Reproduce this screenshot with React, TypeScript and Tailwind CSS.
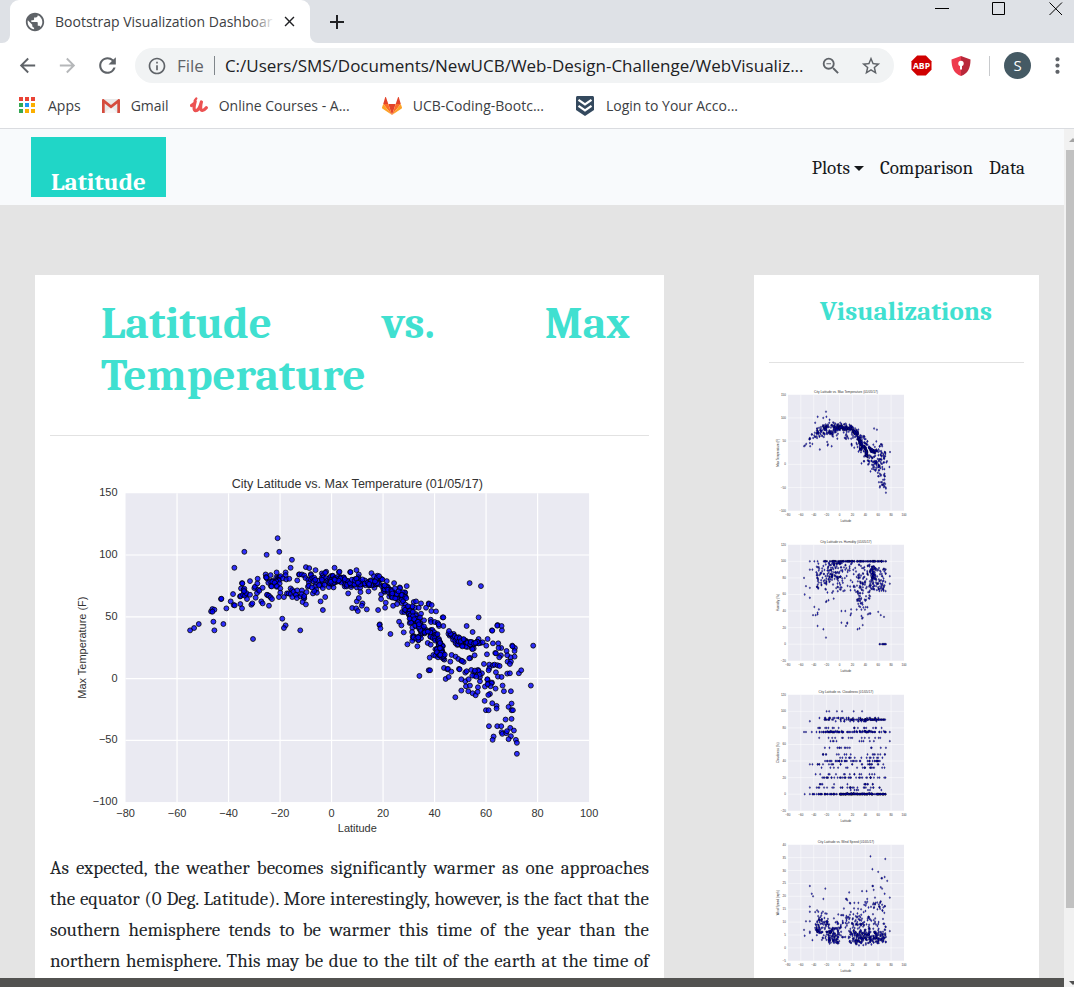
import React from "react";
import {
  MdAdd, MdArrowBack, MdArrowForward, MdClose, MdInfoOutline, MdMoreVert, MdPublic, MdRefresh, MdStarBorder, MdZoomOut,
} from "react-icons/md";

type Point = [number, number];

// Seeded generator, so that the sample data is the same on every load.
function makeRandom(seed: number) {
  let s = seed;
  return () => {
    s = (s * 1664525 + 1013904223) % 4294967296;
    return s / 4294967296;
  };
}

// Temperature samples on a 0-1800 x 0-1200 grid.
const west: Point[] = [
  [624,232],[524,273],[591,282],[629,273],[494,321],[667,297],[663,321],[361,509],[373,502],[387,490],[431,483],[434,509],[461,490],
  [454,415],[455,414],[470,443],[550,535],[638,474],[648,494],[643,502],[692,509],[760,448],[424,452],[428,445],[434,447],[428,453],
  [483,422],[490,400],[492,433],[495,434],[512,430],[517,443],[511,407],[513,406],[517,367],[518,368],[514,383],[522,387],[524,384],[524,395],[528,401],
  [520,402],[526,405],[532,415],[530,397],[523,391],[541,402],[541,361],[545,432],[548,428],[558,411],[554,382],[556,378],[564,354],[563,368],
  [566,387],[562,397],[569,390],[579,381],[575,422],[579,428],[598,435],[588,341],[589,349],[592,353],[590,350],[603,343],[596,366],[602,362],
  [608,360],[611,365],[608,363],[604,376],[606,377],[594,403],[592,402],[598,405],[603,410],[607,415],[621,335],[620,350],[624,352],[629,350],[630,349],[633,346],
  [626,358],[628,359],[620,362],[615,366],[630,368],[621,378],[622,376],[632,383],[632,396],[628,409],[643,409],[648,335],[648,343],[640,353],[650,356],
  [659,354],[652,398],[657,398],[663,383],[668,388],[663,400],[668,409],[672,393],[680,403],[679,402],[683,389],[682,412],[683,359],[688,341],[690,341],
  [697,341],[704,344],[693,407],[697,389],[696,400],[704,413],[703,411],[704,406],[699,424],[709,431],[711,394],[709,319],[719,322],[738,328],
  [724,340],[724,343],[708,352],[716,357],[718,366],[715,378],[718,375],[724,357],[728,352],[734,351],[732,362],[740,367],[736,377],[740,386],[730,398],
  [742,396],[734,391],[753,422],[767,409],[757,338],[760,343],[770,333],[767,336],[756,352],[762,350],[758,362],[759,370],[754,375],[760,382],
  [770,352],[774,360],[780,351],[784,346],[788,355],[776,365],[783,372],[792,380],[778,379],[789,363],[796,365],[795,321],[808,334],
  [727,380],[745,360],[749,373],[765,372],[787,366],[757,357],[792,352],[737,357],
];
const east: Point[] = [
  [9,345],[30,333],[62,334],[63,334],[81,328],[88,341],[126,337],[56,398],[65,379],[82,380],[92,381],[93,394],[117,392],[135,381],
  [68,442],[80,443],[85,451],[82,422],[88,412],[99,428],[97,435],[112,446],[146,448],[151,491],[150,493],[153,503],[183,520],[194,367],[172,361],
  [232,376],[155,401],[155,415],[169,426],[167,441],[191,435],[203,430],[209,483],[216,494],[223,515],[234,551],[264,557],[218,454],[225,454],[230,449],
  [217,427],[211,380],[212,382],[212,396],[227,396],[228,407],[253,424],[260,422],[275,428],[290,441],[298,428],[299,430],[307,433],[306,451],[320,452],
  [257,441],[268,441],[246,441],[249,437],[247,458],[259,460],[275,459],[269,474],[284,479],[304,477],[305,484],[316,484],[325,487],[329,496],[342,496],
  [340,470],[342,470],[328,491],[241,487],[249,483],[257,475],[249,501],[248,514],[250,528],[252,534],[265,530],[272,525],[267,539],[295,547],[304,552],[301,591],
  [270,646],[298,629],[302,629],[349,655],[358,649],[344,622],[354,626],[356,625],[366,633],[345,597],[363,603],[312,583],[318,585],[326,590],
  [421,367],[455,376],[448,470],[412,496],[430,514],[505,493],[504,495],[517,496],[518,509],[488,509],[489,510],[549,555],[557,562],[556,571],[550,557],[612,555],
  [556,588],[544,590],[532,571],[534,584],[535,603],[545,603],[542,610],[516,562],[508,562],[507,548],[491,548],[515,584],[510,590],[498,577],[500,578],
  [475,535],[473,581],[448,535],[454,547],[460,545],[471,555],[436,584],[423,592],[420,593],[367,583],[379,588],[387,595],[396,600],[403,604],[398,601],
  [464,610],[480,612],[491,614],[496,612],[505,614],[511,616],[480,623],[478,629],[500,635],[506,648],[517,649],[534,639],[542,638],[569,638],[576,629],
  [605,675],[524,692],[545,692],[520,675],[499,684],[467,678],[475,657],[474,656],[477,669],[488,666],[487,668],[484,677],[475,671],[482,700],[477,703],
  [466,721],[489,728],[502,736],[502,744],[470,749],[478,749],[547,729],[538,739],[547,749],[551,749],[529,777],[547,775],[479,797],[504,797],[516,797],
  [543,802],[554,810],[517,815],[519,820],[531,818],[533,812],[545,827],[538,836],[560,838],[563,847],[563,880],[493,828],[490,838],[378,710],
  [396,690],[417,692],[430,698],[439,704],[445,694],[446,680],[452,662],[452,649],[410,677],[422,675],[408,662],[396,656],[418,656],
  [389,625],[391,626],[408,636],[412,632],[426,628],[435,635],[435,645],[446,628],[448,631],[458,638],[451,642],[437,630],[429,645],[441,648],
];
// Dense bands: start x, start y, end x, end y, spread, count.
const bands: number[][] = [
  [3,356,52,366,14,34],[48,364,90,364,10,12],[80,358,110,368,13,20],[116,360,155,358,14,28],[160,380,190,400,13,28],[192,396,230,412,14,24],
  [222,436,252,460,12,16],[242,462,268,500,14,28],[262,475,280,525,15,14],[282,505,325,530,13,26],[322,525,344,590,14,28],[322,568,345,578,12,18],
  [358,515,390,545,12,16],[386,540,430,555,12,36],[422,550,450,549,7,10],[245,533,270,534,8,8],
];
const rnd = makeRandom(11);
const temperature: Point[] = [
  ...west.map(([x, y]): Point => [x + 60, y + 45]),
  ...east.map(([x, y]): Point => [x + 840, y + 45]),
  ...bands.flatMap(([x0, y0, x1, y1, spread, n]) =>
    Array.from({ length: n }, (): Point => {
      const t = rnd();
      return [840 + x0 + (x1 - x0) * t + (rnd() - 0.5) * spread, 45 + y0 + (y1 - y0) * t + (rnd() - 0.5) * 2 * spread];
    }),
  ),
];

const PLOT = { left: 227, right: 1620, top: 142, bottom: 1070 };
const toGrid = (min: number, max: number) => ([lat, v]: Point): Point => [
  PLOT.left + ((lat + 80) / 180) * (PLOT.right - PLOT.left),
  PLOT.bottom - ((v - min) / (max - min)) * (PLOT.bottom - PLOT.top),
];

function spread(n: number, seed: number, make: (r: () => number) => Point): Point[] {
  const r = makeRandom(seed);
  return Array.from({ length: n }, () => make(r));
}

const humidity: Point[] = [
  ...([[-55,80],[-54,60],[-52,70],[-46,90],[-46,56],[-46,68],[-42,90],[-39,45],[-32,42],[-41,35],[-37,35],[-34,36],[-34,38],[-34,22],[-25,18],[-21,8],
    [-21,51],[-20,52],[-17,53],[-9,55],[3,40],[9,40],[3,26],[12,25],[12,26],[10,22],[17,35],[18,42],[18,37],[28,18],[31,19],[36,23],[34,34],[35,31],[36,32],
    [44,36],[46,37],[48,37],[60,39],[64,35],[69,33],[62,0],[63,0],[66,0],[67,0],[68,0],[69,0],[70,0],[71,0],[72,0],[78,82],[78,73],[-46,100],[-39,100],[-34,100]] as Point[]),
  ...spread(120, 3, (r) => [-25 + r() * 98, 100]),
  ...spread(50, 5, (r) => [-36 + r() * 16, 64 + r() * 34]),
  ...spread(65, 6, (r) => [-20 + r() * 22, 78 + r() * 21]),
  ...spread(80, 7, (r) => [-20 + r() * 48, 62 + r() * 36]),
  ...spread(85, 8, (r) => [27 + r() * 21, 52 + r() * 44]),
  ...spread(100, 9, (r) => [47 + r() * 25, 64 + r() * 30]),
  ...spread(35, 10, (r) => [50 + r() * 6, 78 + r() * 16]),
  ...spread(16, 12, (r) => [26 + r() * 18, 40 + r() * 16]),
].map(toGrid(-20, 120));

const cloudRow = (v: number, n: number, from: number, to: number, seed: number) =>
  spread(n, seed, (r) => [from + r() * (to - from), v]);
const cloudiness: Point[] = [
  ...([[-20,100],[-16,100],[-4,100],[4,100],[22,100],[35,100],[-46,88],[-55,75],[-52,75],[-43,75],[78,64],[78,75],[-54,0],[-46,0],[-46,36],[-42,36],[-37,24],[-46,8]] as Point[]),
  ...cloudRow(92, 26, -35, 68, 21), ...cloudRow(90, 28, -25, 30, 22), ...cloudRow(90, 60, 30, 72, 23), ...cloudRow(88, 14, -10, 60, 24),
  ...cloudRow(80, 20, -35, 72, 25), ...cloudRow(76, 22, -20, 74, 26), ...cloudRow(75, 75, -36, 72, 27), ...cloudRow(68, 15, -36, 64, 28),
  ...cloudRow(64, 9, -34, 62, 29), ...cloudRow(56, 14, -28, 72, 30), ...cloudRow(48, 18, -30, 74, 31), ...cloudRow(44, 15, -10, 70, 32),
  ...cloudRow(40, 40, -30, 70, 33), ...cloudRow(36, 24, -36, 68, 34), ...cloudRow(32, 18, -35, 70, 35), ...cloudRow(24, 14, -30, 68, 36),
  ...cloudRow(20, 38, -28, 72, 37), ...cloudRow(12, 14, -34, 68, 38), ...cloudRow(8, 26, -36, 72, 39), ...cloudRow(5, 7, 15, 70, 40),
  ...cloudRow(0, 50, -42, 10, 41), ...cloudRow(0, 140, 0, 72, 42), ...cloudRow(1, 16, 10, 55, 43),
].map(toGrid(-20, 120));

const wind: Point[] = [
  ...([[48,35.5],[71,34.5],[51,30.5],[60,29.5],[65,27],[66,27],[70,27.5],[74,26],[-46,24],[-22,23],[-43,21],[-41,20],[-25,19],[15,21.5],[35,22],[42,22],
    [51,24],[52,24],[53,22.5],[64,23.5],[66,23],[70,21],[78,19.5],[10,19],[11,19],[12,18.5],[43,19],[55,19.5],[64,18],[78,6.5],[-55,7],[-54,4.7],[-52,10.3],
    [-46,16],[-46,14],[-46,10.3],[-46,6.3],[-46,5.8],[-42,3]] as Point[]),
  ...spread(55, 51, (r) => [-38 + r() * 20, 6 + r() * r() * 12]),
  ...spread(45, 52, (r) => [-38 + r() * 24, 3 + r() * 8]),
  ...spread(90, 53, (r) => [-18 + r() * 18, 1.5 + r() * 6.5]),
  ...spread(40, 54, (r) => [-12 + r() * 27, 3 + r() * 10]),
  ...spread(170, 55, (r) => [15 + r() * 57, 1.8 + r() * 4.5]),
  ...spread(110, 56, (r) => [14 + r() * 58, 2.5 + r() * 7]),
  ...spread(95, 57, (r) => [4 + r() * 68, 9 + r() * 9]),
  ...spread(6, 58, (r) => [25 + r() * 46, 0.5 + r()]),
].map(toGrid(-5, 40));

type ChartProps = { title: string; yLabel: string; ticks: number[]; points: Point[]; small?: boolean };

function Chart({ title, yLabel, ticks, points, small }: ChartProps) {
  const w = small ? 150 : 600;
  const h = small ? 150 : 400;
  const sx = w / 1800;
  const sy = h / 1200;
  const left = PLOT.left * sx;
  const right = PLOT.right * sx;
  const top = PLOT.top * sy;
  const bottom = PLOT.bottom * sy;
  const tickSize = small ? 3 : 11;
  const fmt = (n: number) => (n < 0 ? "\u2212" + -n : String(n));
  const xs = [-80, -60, -40, -20, 0, 20, 40, 60, 80, 100];
  const px = (i: number) => left + ((right - left) * i) / (xs.length - 1);
  const py = (i: number) => bottom - ((bottom - top) * i) / (ticks.length - 1);
  const labelX = small ? 10 : 36;
  return (
    <svg viewBox={`0 0 ${w} ${h}`} role="img" aria-label={title} className={small ? "block size-[150px]" : "block h-auto w-full"} fontFamily="'Liberation Sans', Arial, sans-serif" fill="#333">
      <rect x={left} y={top} width={right - left} height={bottom - top} fill="#eaeaf2" />
      {xs.slice(1, -1).map((x, i) => (
        <line key={x} x1={px(i + 1)} x2={px(i + 1)} y1={top} y2={bottom} stroke="#fff" strokeWidth={small ? 0.5 : 1.2} />
      ))}
      {ticks.slice(1, -1).map((t, i) => (
        <line key={t} x1={left} x2={right} y1={py(i + 1)} y2={py(i + 1)} stroke="#fff" strokeWidth={small ? 0.5 : 1.2} />
      ))}
      {points.map(([x, y], i) => (
        <ellipse key={i} cx={x * sx} cy={y * sy} rx={7.4 * sx} ry={7.4 * sy} fill="#0000ff" fillOpacity={0.8} stroke="#000" strokeOpacity={0.8} strokeWidth={small ? 0.4 : 1} />
      ))}
      <text x={(left + right) / 2} y={top - (small ? 2 : 5)} textAnchor="middle" fontSize={small ? 3.2 : 12.6}>{title}</text>
      {xs.map((x, i) => (
        <text key={x} x={px(i)} y={bottom + (small ? 5.5 : 15)} textAnchor="middle" fontSize={tickSize}>{fmt(x)}</text>
      ))}
      {ticks.map((t, i) => (
        <text key={t} x={left - (small ? 2 : 8)} y={py(i) + (small ? 1 : 3)} textAnchor="end" fontSize={tickSize}>{fmt(t)}</text>
      ))}
      <text x={(left + right) / 2} y={bottom + (small ? 11.5 : 30)} textAnchor="middle" fontSize={tickSize}>Latitude</text>
      <text transform={`rotate(-90 ${labelX} ${(top + bottom) / 2})`} x={labelX} y={(top + bottom) / 2} textAnchor="middle" fontSize={tickSize}>{yLabel}</text>
    </svg>
  );
}

const plots: ChartProps[] = [
  { title: "City Latitude vs. Max Temperature (01/05/17)", yLabel: "Max Temperature (F)", ticks: [-100, -50, 0, 50, 100, 150], points: temperature },
  { title: "City Latitude vs. Humidity (01/05/17)", yLabel: "Humidity (%)", ticks: [-20, 0, 20, 40, 60, 80, 100, 120], points: humidity },
  { title: "City Latitude vs. Cloudiness (01/05/17)", yLabel: "Cloudiness (%)", ticks: [-20, 0, 20, 40, 60, 80, 100, 120], points: cloudiness },
  { title: "City Latitude vs. Wind Speed (01/05/17)", yLabel: "Wind Speed (mph)", ticks: [-5, 0, 5, 10, 15, 20, 25, 30, 35, 40], points: wind },
];

function AppsIcon() {
  const colors = ["#ea4335", "#ea4335", "#ea4335", "#34a853", "#2196f3", "#fbaf00", "#34a853", "#fbaf00", "#fbaf00"];
  return (
    <svg viewBox="0 0 17 17" className="size-[17px]">
      {colors.map((c, i) => <rect key={i} x={(i % 3) * 6} y={Math.floor(i / 3) * 6} width="4" height="4" fill={c} />)}
    </svg>
  );
}
function GmailIcon() {
  return (
    <svg viewBox="0 0 18 14" className="h-[14px] w-[18px]">
      <rect width="18" height="14" rx="1" fill="#e9e9e9" />
      <path d="M2.5 14 9 8l6.500 6z" fill="#f7f7f7" />
      <path d="M0 1.200V14h2.700V4.500L9 9.500l6.300-5V14H18V1.200C18 .2 16.800-.3 15.900.4L9 6 2.100.4C1.200-.3 0 .2 0 1.200z" fill="#d54b3d" />
    </svg>
  );
}
function UdemyIcon() {
  return (
    <svg viewBox="0 0 18 17" className="h-[17px] w-[18px]" fill="none" stroke="#ec5252" strokeLinecap="round" strokeLinejoin="round">
      <path d="M1.500 8.500 4.200 6.500M5.200 4.500C4 8.500 3.200 13.600 5.800 13.700c2.600 0 4.500-4.700 5.600-8.700-1.200 5-1.100 8.600 1 8.500 1.500-.1 2.700-1.200 3.900-2.700" strokeWidth="3.200" />
      <path d="M4.800 3.500 6.300 1.500" strokeWidth="2.200" />
    </svg>
  );
}
function GitlabIcon() {
  return (
    <svg viewBox="0 0 20 18" className="h-[18px] w-[20px]">
      <path d="M10 18 13.700 7H6.300z" fill="#e24329" />
      <path d="M10 18 6.300 7H1.200zM10 18 13.700 7h5.100z" fill="#fc6d26" />
      <path d="M1.200 7 0 10.500c-.1.400 0 .8.300 1L10 18zM18.800 7 20 10.500c.1.400 0 .8-.3 1L10 18z" fill="#fca326" />
      <path d="M1.200 7h5.100L4 .3c-.1-.4-.6-.4-.8 0zM18.800 7h-5.100L16 .3c.1-.4.600-.4.800 0z" fill="#e24329" />
    </svg>
  );
}
function BootcampIcon() {
  return (
    <svg viewBox="0 0 18 20" className="h-[20px] w-[18px]">
      <path d="M1.500 0h15C17.300 0 18 .7 18 1.500V14l-9 6-9-6V1.500C0 .7.700 0 1.500 0z" fill="#34495e" />
      <path d="m2.500 3.800 6.500 4.700 6.500-4.700M2.500 9.800 9 14.500l6.500-4.700" fill="none" stroke="#fff" strokeWidth="2.200" />
    </svg>
  );
}

const bookmarks = [
  { label: "Apps", icon: <AppsIcon />, cls: "gap-[12px]" },
  { label: "Gmail", icon: <GmailIcon />, cls: "gap-[11px]" },
  { label: "Online Courses - A...", icon: <UdemyIcon />, cls: "gap-[11px]" },
  { label: "UCB-Coding-Bootc...", icon: <GitlabIcon />, cls: "ml-[11px] gap-[11px]" },
  { label: "Login to Your Acco...", icon: <BootcampIcon />, cls: "ml-[11px] gap-[12px]" },
];

function BrowserChrome() {
  return (
    <header className="shrink-0 border-b border-[#dadce0] bg-white font-['Open_Sans','Noto_Sans',sans-serif] text-[#3c4043]">
      <div className="flex h-[43px] justify-between bg-[#dee1e6]">
        <div className="flex pl-[10px]">
          <div className="relative flex w-[300px] items-center rounded-t-[9px] bg-white pl-[14px]">
            <svg viewBox="0 0 8 8" className="absolute bottom-0 -left-2 size-2"><path d="M8 0v8H0a8 8 0 0 0 8-8z" fill="#fff" /></svg>
            <svg viewBox="0 0 8 8" className="absolute -right-2 bottom-0 size-2"><path d="M0 0v8h8a8 8 0 0 1-8-8z" fill="#fff" /></svg>
            <MdPublic className="size-[22px] text-[#5f6368]" />
            <div className="relative ml-[9px] w-[220px] text-[14px] whitespace-nowrap">
              Bootstrap Visualization Dashboar
              <div className="absolute inset-y-0 right-0 w-[24px] bg-linear-to-r from-white/0 to-white" />
            </div>
            <button aria-label="Close tab" className="ml-[6px]"><MdClose className="size-[17px] text-[#202124]" /></button>
          </div>
          <button aria-label="New tab" className="ml-[15px]"><MdAdd className="size-[24px] text-[#202124]" /></button>
        </div>
        <div className="flex gap-[43px] pt-[2px] pr-[11px]">
          <button aria-label="Minimize" className="h-[13px]"><svg viewBox="0 0 14 14" className="size-[14px]"><path d="M0 6.500h14" stroke="#000" /></svg></button>
          <button aria-label="Maximize" className="h-[13px]"><svg viewBox="0 0 14 14" className="size-[14px]"><path d="M.5.5h12v12H.5z" fill="none" stroke="#000" /></svg></button>
          <button aria-label="Close window" className="h-[13px]"><svg viewBox="0 0 14 14" className="size-[14px]"><path d="m.5.5 12.500 12.500M13 .5.500 13" stroke="#000" /></svg></button>
        </div>
      </div>
      <div className="flex h-[45px] items-center pl-[16px] text-[#5f6368]">
        <button aria-label="Back"><MdArrowBack className="size-[23px]" /></button>
        <button aria-label="Forward" className="ml-[17px]"><MdArrowForward className="size-[23px] text-[#b5b7b9]" /></button>
        <button aria-label="Reload" className="ml-[16px]"><MdRefresh className="size-[25px]" /></button>
        <div className="ml-[15px] flex h-[35px] min-w-0 flex-1 items-center rounded-full bg-[#f1f3f4] pr-[12px] pl-[12px]">
          <MdInfoOutline className="size-[20px] shrink-0" />
          <label htmlFor="url" className="ml-[10px] text-[17px]">File</label>
          <span className="mx-[10px] h-[19px] w-px bg-[#80868b]" />
          <input id="url" className="min-w-0 flex-1 bg-transparent text-[17px] text-[#202124] outline-none" defaultValue="C:/Users/SMS/Documents/NewUCB/Web-Design-Challenge/WebVisualiz..." />
          <button aria-label="Zoom out"><MdZoomOut className="size-[22px]" /></button>
          <button aria-label="Bookmark" className="ml-[18px]"><MdStarBorder className="size-[22px]" /></button>
        </div>
        <button aria-label="AdBlock Plus" className="ml-[17px]">
          <svg viewBox="0 0 22 22" className="size-[21px]">
            <path d="M6.500.5h9l6 6v9l-6 6h-9l-6-6v-9z" fill="#d00000" />
            <text x="11" y="14.500" textAnchor="middle" fontSize="9" fontWeight="700" fill="#fff" fontFamily="'Open Sans', sans-serif">ABP</text>
          </svg>
        </button>
        <button aria-label="Shield" className="ml-[19px]">
          <svg viewBox="0 0 20 20" className="size-[20px]">
            <path d="M10 0 .5 3.500C.5 12 3 17.500 10 20z" fill="#ee3a4d" />
            <path d="m10 0 9.500 3.500C19.500 12 17 17.500 10 20z" fill="#b9283a" />
            <circle cx="10" cy="7.500" r="2.700" fill="#fff" /><path d="M9 9h2v4.500H9z" fill="#fff" />
          </svg>
        </button>
        <span className="ml-[18px] h-[20px] w-px bg-[#c8cacd]" />
        <button aria-label="Profile" className="ml-[14px] size-[27px] rounded-full bg-[#455a64] text-[15px] text-white">S</button>
        <button aria-label="Menu" className="ml-[14px] mr-[4px]"><MdMoreVert className="size-[25px]" /></button>
      </div>
      <nav aria-label="Bookmarks" className="flex h-[40px] items-center gap-[21px] pb-[5px] pl-[19px] text-[14px]">
        {bookmarks.map((b) => (
          <a key={b.label} href="#" className={`flex items-center whitespace-nowrap ${b.cls}`}>{b.icon}{b.label}</a>
        ))}
      </nav>
    </header>
  );
}

export default function App() {
  return (
    <div className="flex h-screen flex-col overflow-hidden bg-[#e4e4e4]">
      <BrowserChrome />
      <div className="flex min-h-0 flex-1">
        <div className="flex min-w-0 flex-1 flex-col font-[Cambria,Caladea,'Liberation_Serif',serif] text-[#212529]">
          <div className="min-h-0 flex-1 overflow-hidden">
            <nav aria-label="Main" className="flex h-[76px] items-center justify-between bg-[#f8fafc] pr-[39px] pl-[31px]">
              <a href="#" className="flex h-[60px] items-end bg-[#20d6c7] px-[20px] text-[25px] leading-[30px] font-bold text-white">Latitude</a>
              <div className="flex gap-[16px] pt-[2px] text-[19px] text-[#16181b]">
                <button className="flex items-center gap-[4px]">
                  Plots<span className="border-x-[5px] border-t-[5px] border-x-transparent border-t-current" />
                </button>
                <a href="#">Comparison</a>
                <a href="#">Data</a>
              </div>
            </nav>
            <div className="flex items-start justify-between pt-[70px] pr-[25px] pl-[35px]">
              <main className="w-[629px] bg-white px-[15px]">
                <h1 className="border-b border-[#e2e2e2] pt-[22px] pr-[19px] pb-[34px] pl-[51px] text-justify text-[45px] leading-[52px] font-bold text-[#40e0d0]">
                  Latitude vs. Max Temperature
                </h1>
                <div className="pt-[10px]"><Chart {...plots[0]} /></div>
                <p className="pt-[8px] pb-10 text-justify text-[19px] leading-[31px] [text-align-last:justify]">
                  As expected, the weather becomes significantly warmer as one approaches the equator (0 Deg. Latitude). More interestingly, however, is the fact that the southern hemisphere tends to be warmer this time of the year than the northern hemisphere. This may be due to the tilt of the earth at the time of
                </p>
              </main>
              <aside className="w-[285px] bg-white px-[15px] pb-10">
                <h2 className="border-b border-[#e2e2e2] pt-[20px] pb-[34px] pl-[51px] text-[27px] leading-[33px] font-bold text-[#40e0d0]">Visualizations</h2>
                <div className="pt-[14px]">
                  {plots.map((p) => <a key={p.title} href="#" className="block w-[150px]"><Chart {...p} small /></a>)}
                </div>
              </aside>
            </div>
          </div>
          <footer className="h-[9px] shrink-0 bg-[#525250]" />
        </div>
        <div aria-hidden="true" className="flex w-[10px] shrink-0 flex-col overflow-hidden bg-[#f1f1f1] pl-[2px]">
          <div className="flex h-[21px] w-[13px] items-center justify-center"><span className="border-x-[4px] border-b-[4px] border-x-transparent border-b-[#a3a3a3]" /></div>
          <div className="h-[758px] w-[13px] shrink-0 bg-[#c1c1c1]" />
          <div className="mt-auto flex h-[6px] w-[13px] items-start justify-center"><span className="border-x-[4px] border-t-[4px] border-x-transparent border-t-[#505050]" /></div>
        </div>
      </div>
    </div>
  );
}
